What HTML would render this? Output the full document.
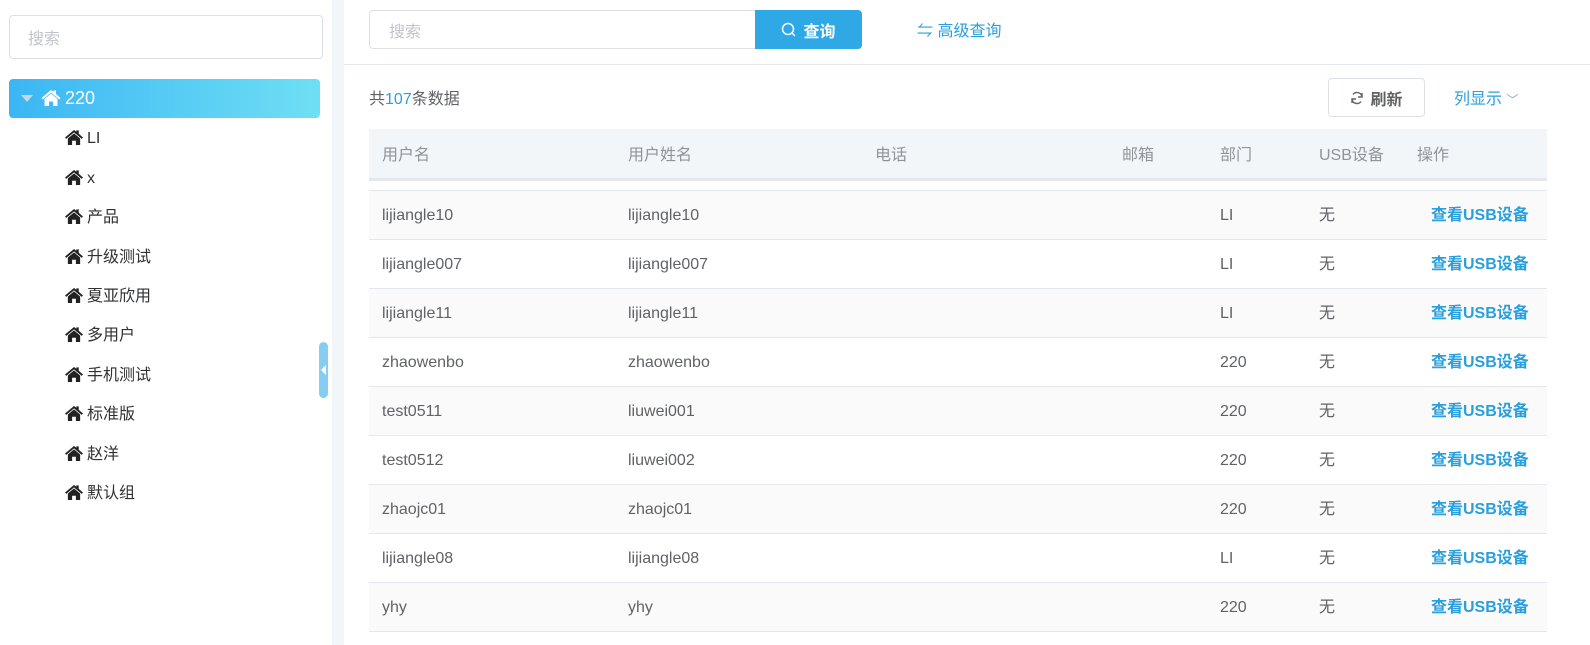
<!DOCTYPE html>
<html><head><meta charset="utf-8"><style>
*{box-sizing:border-box;margin:0;padding:0}
body{width:1590px;height:645px;overflow:hidden;background:#fff;font-family:"Liberation Sans","Noto Sans CJK SC",sans-serif;font-size:16px;color:#606266;position:relative}
.abs{position:absolute}
.side{left:0;top:0;width:332px;height:645px;background:#fff}
.gap{left:332px;top:0;width:12px;height:645px;background:#f3f6f9}
.sinput{left:9px;top:15px;width:314px;height:44px;border:1px solid #dcdfe6;border-radius:4px;color:#c0c4cc;padding:14px 18px 0;font-size:16px;line-height:20px}
.sel{left:9px;top:79px;width:311px;height:39px;border-radius:4px;background:linear-gradient(90deg,#3bb6f3,#6fdff5);color:#fff;font-size:18px}
.node{left:64px;color:#303133;font-size:16px;height:20px;line-height:20px;display:flex;align-items:center}
.node svg{margin-right:3px;position:relative;top:-2px}
.handle{left:319px;top:342px;width:9px;height:56px;border-radius:5px;background:#86cdf2}
.mi{left:369px;top:10px;width:387px;height:39px;border:1px solid #dcdfe6;border-right:none;border-radius:4px 0 0 4px;color:#c0c4cc;padding:12px 19px 0;font-size:16px;line-height:20px}
.btn{left:755px;top:10px;width:107px;height:39px;background:#2ea9e6;border-radius:0 4px 4px 0;color:#fff;font-weight:bold;display:flex;align-items:center;justify-content:center;font-size:16px}
.hline{left:344px;top:64px;width:1246px;height:1px;background:#e4e7ed}
table{border-collapse:collapse;position:absolute;left:369px;top:129px;width:1178px}
th{height:50px;background:#f3f6f9;color:#909399;font-weight:normal;text-align:left;padding:6px 0 0 13px;font-size:16px;border-bottom:3px solid #e4e7ed;line-height:20px}
td{height:49px;padding:4px 0 0 13px;border-bottom:1px solid #e4e7ed;font-size:16px;color:#606266;line-height:20px;vertical-align:middle}
td span{display:inline-block;line-height:20px;height:20px;vertical-align:middle}
tr.g td{background:#fafafa}
td.lk{color:#2a9fdd;font-weight:bold;padding-left:27px}
</style></head><body>
<div class="abs side"></div>
<div class="abs gap"></div>
<div class="abs sinput">搜索</div>
<div class="abs sel"><span class="abs" style="left:12px;top:16px;width:0;height:0;border-left:6px solid transparent;border-right:6px solid transparent;border-top:7px solid #c8d6e0"></span>
<svg class="abs" style="left:32px;top:10px" width="20" height="18" viewBox="0 0 20 18"><path d="M10 1L0.5 9l1.3 1.5L10 3.6l8.2 6.9 1.3-1.5L15 5V1.5h-2.5v1.4z" fill="#fff"/><path d="M3.5 10L10 4.6 16.5 10v7h-4.5v-4.5h-4V17H3.5z" fill="#fff"/></svg>
<span class="abs" style="left:56px;top:9px">220</span></div>
<div class="abs handle"><span class="abs" style="left:2px;top:23px;border-top:5px solid transparent;border-bottom:5px solid transparent;border-right:5px solid #fff"></span></div>
<div class="abs mi">搜索</div>
<div class="abs btn"><svg width="16" height="16" viewBox="0 0 16 16" style="margin-right:6px"><circle cx="7" cy="7" r="5.5" fill="none" stroke="#fff" stroke-width="1.5"/><path d="M11 11l3 3" stroke="#fff" stroke-width="1.5"/></svg>查询</div>
<div class="abs" style="left:917px;top:22px;color:#2a9fdd;font-size:16px;line-height:20px">⇋ 高级查询</div>
<div class="abs hline"></div>
<div class="abs" style="left:369px;top:90px;color:#606266;line-height:20px">共<span style="color:#2a9fdd">107</span>条数据</div>
<div class="abs" style="left:1328px;top:78px;width:97px;height:39px;border:1px solid #dcdfe6;border-radius:4px;display:flex;align-items:center;justify-content:center;color:#606266;font-weight:bold"><svg width="14" height="14" viewBox="0 0 14 14" style="margin-right:6px"><path d="M12 6A5 5 0 0 0 3 3.5M2 8a5 5 0 0 0 9 2.5" fill="none" stroke="#606266" stroke-width="1.4"/><path d="M12 2v4H8M2 12V8h4" fill="none" stroke="#606266" stroke-width="1.4"/></svg>刷新</div>
<div class="abs" style="left:1454px;top:90px;color:#2a9fdd;line-height:20px">列显示 <span style="font-size:12px;color:#8ab">﹀</span></div>
<table>
<tr><th style="width:246px">用户名</th><th style="width:247px">用户姓名</th><th style="width:247px">电话</th><th style="width:98px">邮箱</th><th style="width:99px">部门</th><th style="width:98px">USB设备</th><th>操作</th></tr>
<tr><td colspan="7" style="height:11px;padding:0"></td></tr>
<tr class="g"><td><span>lijiangle10</span></td><td><span>lijiangle10</span></td><td></td><td></td><td><span>LI</span></td><td><span>无</span></td><td class="lk"><span>查看USB设备</span></td></tr>
<tr><td><span>lijiangle007</span></td><td><span>lijiangle007</span></td><td></td><td></td><td><span>LI</span></td><td><span>无</span></td><td class="lk"><span>查看USB设备</span></td></tr>
<tr class="g"><td><span>lijiangle11</span></td><td><span>lijiangle11</span></td><td></td><td></td><td><span>LI</span></td><td><span>无</span></td><td class="lk"><span>查看USB设备</span></td></tr>
<tr><td><span>zhaowenbo</span></td><td><span>zhaowenbo</span></td><td></td><td></td><td><span>220</span></td><td><span>无</span></td><td class="lk"><span>查看USB设备</span></td></tr>
<tr class="g"><td><span>test0511</span></td><td><span>liuwei001</span></td><td></td><td></td><td><span>220</span></td><td><span>无</span></td><td class="lk"><span>查看USB设备</span></td></tr>
<tr><td><span>test0512</span></td><td><span>liuwei002</span></td><td></td><td></td><td><span>220</span></td><td><span>无</span></td><td class="lk"><span>查看USB设备</span></td></tr>
<tr class="g"><td><span>zhaojc01</span></td><td><span>zhaojc01</span></td><td></td><td></td><td><span>220</span></td><td><span>无</span></td><td class="lk"><span>查看USB设备</span></td></tr>
<tr><td><span>lijiangle08</span></td><td><span>lijiangle08</span></td><td></td><td></td><td><span>LI</span></td><td><span>无</span></td><td class="lk"><span>查看USB设备</span></td></tr>
<tr class="g"><td><span>yhy</span></td><td><span>yhy</span></td><td></td><td></td><td><span>220</span></td><td><span>无</span></td><td class="lk"><span>查看USB设备</span></td></tr>
</table>
<div class="abs node" style="top:129px"><svg width="20" height="17" viewBox="0 0 20 18"><path d="M10 1L0.5 9l1.3 1.5L10 3.6l8.2 6.9 1.3-1.5L15 5V1.5h-2.5v1.4z" fill="#222"/><path d="M3.5 10L10 4.6 16.5 10v7h-4.5v-4.5h-4V17H3.5z" fill="#222"/></svg>LI</div>
<div class="abs node" style="top:169px"><svg width="20" height="17" viewBox="0 0 20 18"><path d="M10 1L0.5 9l1.3 1.5L10 3.6l8.2 6.9 1.3-1.5L15 5V1.5h-2.5v1.4z" fill="#222"/><path d="M3.5 10L10 4.6 16.5 10v7h-4.5v-4.5h-4V17H3.5z" fill="#222"/></svg>x</div>
<div class="abs node" style="top:208px"><svg width="20" height="17" viewBox="0 0 20 18"><path d="M10 1L0.5 9l1.3 1.5L10 3.6l8.2 6.9 1.3-1.5L15 5V1.5h-2.5v1.4z" fill="#222"/><path d="M3.5 10L10 4.6 16.5 10v7h-4.5v-4.5h-4V17H3.5z" fill="#222"/></svg>产品</div>
<div class="abs node" style="top:248px"><svg width="20" height="17" viewBox="0 0 20 18"><path d="M10 1L0.5 9l1.3 1.5L10 3.6l8.2 6.9 1.3-1.5L15 5V1.5h-2.5v1.4z" fill="#222"/><path d="M3.5 10L10 4.6 16.5 10v7h-4.5v-4.5h-4V17H3.5z" fill="#222"/></svg>升级测试</div>
<div class="abs node" style="top:287px"><svg width="20" height="17" viewBox="0 0 20 18"><path d="M10 1L0.5 9l1.3 1.5L10 3.6l8.2 6.9 1.3-1.5L15 5V1.5h-2.5v1.4z" fill="#222"/><path d="M3.5 10L10 4.6 16.5 10v7h-4.5v-4.5h-4V17H3.5z" fill="#222"/></svg>夏亚欣用</div>
<div class="abs node" style="top:326px"><svg width="20" height="17" viewBox="0 0 20 18"><path d="M10 1L0.5 9l1.3 1.5L10 3.6l8.2 6.9 1.3-1.5L15 5V1.5h-2.5v1.4z" fill="#222"/><path d="M3.5 10L10 4.6 16.5 10v7h-4.5v-4.5h-4V17H3.5z" fill="#222"/></svg>多用户</div>
<div class="abs node" style="top:366px"><svg width="20" height="17" viewBox="0 0 20 18"><path d="M10 1L0.5 9l1.3 1.5L10 3.6l8.2 6.9 1.3-1.5L15 5V1.5h-2.5v1.4z" fill="#222"/><path d="M3.5 10L10 4.6 16.5 10v7h-4.5v-4.5h-4V17H3.5z" fill="#222"/></svg>手机测试</div>
<div class="abs node" style="top:405px"><svg width="20" height="17" viewBox="0 0 20 18"><path d="M10 1L0.5 9l1.3 1.5L10 3.6l8.2 6.9 1.3-1.5L15 5V1.5h-2.5v1.4z" fill="#222"/><path d="M3.5 10L10 4.6 16.5 10v7h-4.5v-4.5h-4V17H3.5z" fill="#222"/></svg>标准版</div>
<div class="abs node" style="top:445px"><svg width="20" height="17" viewBox="0 0 20 18"><path d="M10 1L0.5 9l1.3 1.5L10 3.6l8.2 6.9 1.3-1.5L15 5V1.5h-2.5v1.4z" fill="#222"/><path d="M3.5 10L10 4.6 16.5 10v7h-4.5v-4.5h-4V17H3.5z" fill="#222"/></svg>赵洋</div>
<div class="abs node" style="top:484px"><svg width="20" height="17" viewBox="0 0 20 18"><path d="M10 1L0.5 9l1.3 1.5L10 3.6l8.2 6.9 1.3-1.5L15 5V1.5h-2.5v1.4z" fill="#222"/><path d="M3.5 10L10 4.6 16.5 10v7h-4.5v-4.5h-4V17H3.5z" fill="#222"/></svg>默认组</div>
</body></html>
